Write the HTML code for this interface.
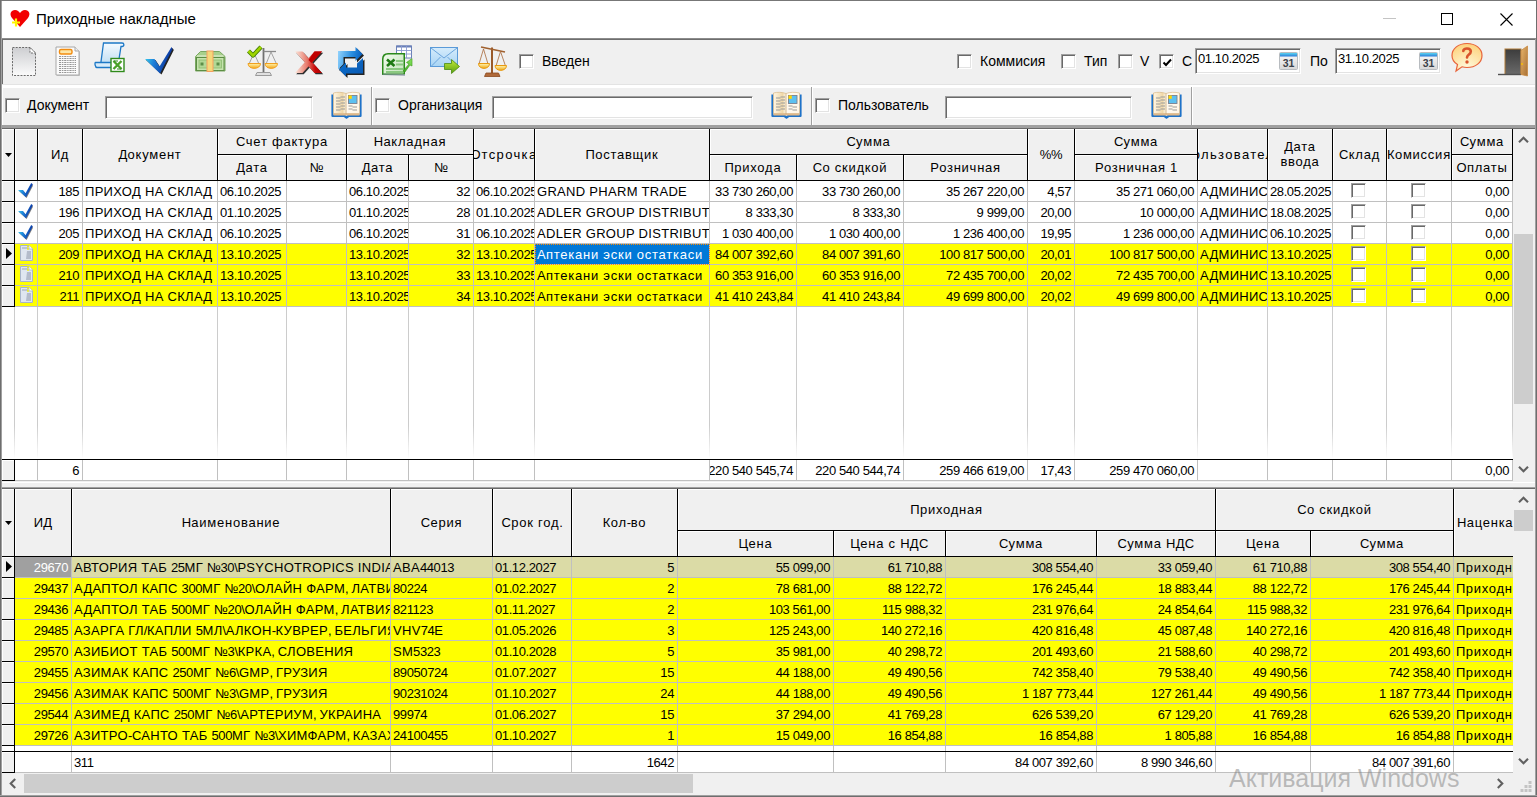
<!DOCTYPE html><html><head><meta charset="utf-8"><style>
*{margin:0;padding:0;box-sizing:border-box}
html,body{width:1537px;height:797px;overflow:hidden;background:#f0f0f0;font-family:"Liberation Sans",sans-serif;color:#000}
div{position:absolute}
svg{position:absolute;overflow:visible}
.d{letter-spacing:-0.4px}.u{letter-spacing:0.3px}.l{letter-spacing:0.75px}
.g{font-size:13px;line-height:20px;white-space:nowrap;overflow:hidden;display:flex;align-items:center}
.hc{background:#f0f0f0;border-right:1px solid #000;border-bottom:1px solid #000;box-shadow:inset 1px 1px 0 #fff;font-size:13px;line-height:14px;white-space:nowrap;overflow:hidden;display:flex;align-items:center;justify-content:center;text-align:center}
.c{border-right:1px solid #c0c0c0;border-bottom:1px solid #c0c0c0;font-size:13px;line-height:20px;white-space:nowrap;overflow:hidden;display:flex;align-items:center}
.c>span{position:relative;top:1px}
.r{justify-content:flex-end;padding-right:3px}
.lft{padding-left:2px}
.ind{background:#f0f0f0;border-right:1px solid #000;border-bottom:1px solid #000;box-shadow:inset 1px 1px 0 #fff}
.lbl{font-size:14px;line-height:16px;white-space:nowrap}
.cb{width:15px;height:15px;background:#fff;border-top:1px solid #a0a0a0;border-left:1px solid #a0a0a0;border-right:1px solid #fff;border-bottom:1px solid #fff;box-shadow:inset 1px 1px 0 #696969, inset -1px -1px 0 #e3e3e3}
.ed{background:#fff;border-top:1px solid #a0a0a0;border-left:1px solid #a0a0a0;border-right:1px solid #fff;border-bottom:1px solid #fff;box-shadow:inset 1px 1px 0 #696969, inset -1px -1px 0 #e3e3e3}
</style></head><body><div style="left:0px;top:0px;width:1537px;height:797px;background:#f0f0f0"></div>
<div style="left:0px;top:0px;width:1537px;height:1px;background:#777"></div>
<div style="left:1px;top:1px;width:1535px;height:37px;background:#fff"></div>
<div style="left:0px;top:0px;width:1px;height:797px;background:#6e6e6e"></div>
<div style="left:1536px;top:0px;width:1px;height:797px;background:#6e6e6e"></div>
<div style="left:1px;top:0px;width:1px;height:797px;background:#a0a0a0"></div>
<div style="left:1535px;top:38px;width:1px;height:759px;background:#a0a0a0"></div>
<div style="left:0px;top:796px;width:1537px;height:1px;background:#6e6e6e"></div>
<svg style="left:10px;top:10px" width="20" height="18" viewBox="0 0 20 18"><path d="M10 17 L2 8 C-1 4 1 0 5 0 C7.5 0 9 1.5 10 3 C11 1.5 12.5 0 15 0 C19 0 21 4 18 8 Z" fill="#f20000"/><path d="M2 12.5 H10 M6 8.5 V16.5" stroke="#ffff00" stroke-width="2.2" fill="none"/><path d="M2.8 12.5 H9.2 M6 9.3 V15.7" stroke="#ffee00" stroke-width="1" fill="none"/></svg>
<div style="left:36px;top:10px;font-size:15px;line-height:18px;white-space:nowrap;color:#000">Приходные накладные</div>
<div style="left:1383px;top:18px;width:13px;height:1px;background:#c4c4c4"></div>
<div style="left:1441px;top:13px;width:12px;height:12px;border:1px solid #000"></div>
<svg style="left:1500px;top:13px" width="13" height="13" viewBox="0 0 13 13"><path d="M0.5 0.5 L12.5 12.5 M12.5 0.5 L0.5 12.5" stroke="#000" stroke-width="1.1"/></svg>
<div style="left:2px;top:38px;width:1534px;height:1px;background:#8c8c8c"></div>
<div style="left:2px;top:39px;width:1534px;height:1px;background:#6e6e6e"></div>
<div style="left:2px;top:40px;width:1533px;height:44px;background:#f0f0f0"></div>
<div style="left:2px;top:40px;width:1px;height:44px;background:#6e6e6e"></div>
<div style="left:2px;top:84px;width:1534px;height:1px;background:#e3e3e3"></div>
<div style="left:2px;top:85px;width:1534px;height:2px;background:#fff"></div>
<svg style="left:11px;top:46px" width="26" height="31" viewBox="0 0 26 31"><defs><linearGradient id="gnd" x1="0" y1="0" x2="0" y2="1"><stop offset="0" stop-color="#cdced1"/><stop offset="1" stop-color="#fbfbfb"/></linearGradient></defs>
<path d="M1.5 1.5 H19 L24.5 7 V29.5 H1.5 Z" fill="url(#gnd)" stroke="#6a6a6a" stroke-width="1" stroke-dasharray="2 1.2"/>
<path d="M19 1.5 V7 H24.5 Z" fill="#fff" stroke="#6a6a6a" stroke-width="1" stroke-dasharray="2 1.2"/></svg>
<svg style="left:55px;top:46px" width="26" height="31" viewBox="0 0 26 31"><path d="M2 2 H21 L25 6 V30 H2 Z" fill="#c6c6c6"/>
<path d="M1 1 H20 L24 5 V29 H1 Z" fill="#fbfbfb" stroke="#a8a8a8"/>
<path d="M20 1 V5 H24" fill="#eee" stroke="#a8a8a8"/>
<rect x="4.5" y="3.5" width="12.5" height="4.5" rx="1.5" fill="#fde7a8" stroke="#f28c0f" stroke-width="1.4"/><path d="M4 10.5 H21" stroke="#8a8a8a" stroke-width="0.9" stroke-dasharray="2.2 0.8 1.4 0.8"/><path d="M4 12.5 H21" stroke="#8a8a8a" stroke-width="0.9" stroke-dasharray="2.2 0.8 1.4 0.8"/><path d="M4 14.5 H21" stroke="#8a8a8a" stroke-width="0.9" stroke-dasharray="2.2 0.8 1.4 0.8"/><path d="M4 16.5 H21" stroke="#8a8a8a" stroke-width="0.9" stroke-dasharray="2.2 0.8 1.4 0.8"/><path d="M4 18.5 H21" stroke="#8a8a8a" stroke-width="0.9" stroke-dasharray="2.2 0.8 1.4 0.8"/><path d="M4 20.5 H21" stroke="#8a8a8a" stroke-width="0.9" stroke-dasharray="2.2 0.8 1.4 0.8"/><path d="M4 22.5 H21" stroke="#8a8a8a" stroke-width="0.9" stroke-dasharray="2.2 0.8 1.4 0.8"/><path d="M4 24.5 H21" stroke="#8a8a8a" stroke-width="0.9" stroke-dasharray="2.2 0.8 1.4 0.8"/><path d="M4 26.5 H21" stroke="#8a8a8a" stroke-width="0.9" stroke-dasharray="2.2 0.8 1.4 0.8"/></svg>
<svg style="left:94px;top:42px" width="31" height="31" viewBox="0 0 31 31"><defs><linearGradient id="gsc" x1="0" y1="0" x2="0" y2="1"><stop offset="0" stop-color="#f4faff"/><stop offset="1" stop-color="#bcdcf2"/></linearGradient></defs>
<path d="M9.5 1 H28 C30.5 1 30.5 4.5 28 4.5 H27 L24 23.5 H6.5 Z" fill="url(#gsc)" stroke="#1d78c6" stroke-width="1.3"/>
<path d="M1.5 20.5 H22 L23 25.5 H3 C1 25.5 0.5 20.5 1.5 20.5 Z" fill="#d8ecfa" stroke="#1d78c6" stroke-width="1.3"/>
<rect x="17" y="16.5" width="13" height="13" fill="#fff" stroke="#2f8a1a" stroke-width="1.4"/>
<path d="M19.5 19 L27.5 27 M27.5 19 L19.5 27" stroke="#4aa028" stroke-width="2.4"/>
<path d="M19.5 19 H24 M23 27 H27.5" stroke="#2f8a1a" stroke-width="1.2"/></svg>
<svg style="left:145px;top:47px" width="30" height="29" viewBox="0 0 30 29"><defs><linearGradient id="gck" x1="0" y1="0" x2="1" y2="0.3"><stop offset="0" stop-color="#3ee6f6"/><stop offset="0.45" stop-color="#1e7fd8"/><stop offset="1" stop-color="#0a2f9a"/></linearGradient></defs>
<path d="M1 13 H10.5 L15.5 20.5 L27.5 1 L28.8 3 L16.5 27.5 Z" fill="#000" opacity="0.85"/>
<path d="M0 12 H9.5 L14.5 19.5 L26.5 0 L27.5 2 L15 26.5 Z" fill="url(#gck)"/></svg>
<svg style="left:195px;top:51px" width="31" height="21" viewBox="0 0 31 21"><path d="M5.5 0.5 H24.5 L30 5.5 V20 H0.5 V5.5 Z" fill="#a8d08c" stroke="#7aa862" stroke-width="1"/>
<path d="M2 5 H28.5" stroke="#e8f4dc" stroke-width="1"/>
<rect x="1.5" y="6.5" width="27.5" height="13" fill="#c6e4ae" stroke="#5c8e44" stroke-width="1"/>
<rect x="4" y="9" width="22.5" height="8" fill="#b2d896" stroke="#8cbc70" stroke-width="0.8"/>
<rect x="5.5" y="11.5" width="3" height="3" fill="#5e8e48"/><rect x="21.5" y="11.5" width="3" height="3" fill="#5e8e48"/>
<rect x="12" y="0" width="6" height="20.5" fill="#f6d87a" stroke="#f4a060" stroke-width="1"/></svg>
<svg style="left:247px;top:45px" width="33" height="33" viewBox="0 0 33 33"><defs><linearGradient id="gpan" x1="0" y1="0" x2="0" y2="1"><stop offset="0" stop-color="#fff2a8"/><stop offset="1" stop-color="#f4a81c"/></linearGradient></defs>
<path d="M16.5 3 V27" stroke="#707070" stroke-width="1.8"/>
<path d="M16.5 6.5 H29" stroke="#8a8a8a" stroke-width="1.3"/>
<path d="M2 19 L7 8 L12 19 M19 19 L24 7 L29.5 19" stroke="#9a9a9a" stroke-width="0.9" fill="none"/>
<path d="M1 18.5 H13.5 C13.5 25 1 25 1 18.5 Z" fill="url(#gpan)" stroke="#f0a020" stroke-width="1"/>
<path d="M18 18.5 H30.5 C30.5 25 18 25 18 18.5 Z" fill="url(#gpan)" stroke="#f0a020" stroke-width="1"/>
<path d="M8.5 30.5 H24.5 L23 27.5 H10 Z" fill="#e0e0e0" stroke="#9a9a9a" stroke-width="1"/>
<path d="M1.5 6 L6 10.5 L14 2" stroke="#3f7a00" stroke-width="4.2" fill="none" stroke-linejoin="round"/>
<path d="M1.5 6 L6 10.5 L14 2" stroke="#9ed400" stroke-width="2.6" fill="none" stroke-linejoin="round"/></svg>
<svg style="left:294px;top:50px" width="30" height="26" viewBox="0 0 30 26"><defs><linearGradient id="gx1" x1="0" y1="0" x2="1" y2="0"><stop offset="0" stop-color="#fde8dc"/><stop offset="0.45" stop-color="#e6786a"/><stop offset="0.75" stop-color="#c80808"/><stop offset="1" stop-color="#b00000"/></linearGradient></defs>
<g transform="translate(1.2,1.2)" fill="#000" opacity="0.8"><path d="M1 1.5 H8.5 L28 23 H20.5 Z"/><path d="M28 1.5 H20.5 L1 23 H8.5 Z"/></g>
<path d="M1 1.5 H8.5 L28 23 H20.5 Z" fill="url(#gx1)"/>
<path d="M28 1.5 H20.5 L1 23 H8.5 Z" fill="url(#gx1)"/>
<path d="M20.5 1.5 H28 L17.5 13 L14.5 10 Z" fill="#c00000"/></svg>
<svg style="left:337px;top:46px" width="29" height="32" viewBox="0 0 29 32"><defs><linearGradient id="grf" x1="0" y1="0" x2="1" y2="0.2"><stop offset="0" stop-color="#9ad8ff"/><stop offset="0.6" stop-color="#2a8ee0"/><stop offset="1" stop-color="#0a62c0"/></linearGradient><linearGradient id="grf2" x1="0" y1="0" x2="1" y2="1"><stop offset="0" stop-color="#0a70d0"/><stop offset="1" stop-color="#0a58b0"/></linearGradient></defs>
<g transform="translate(1.5,1.5)" fill="#000" opacity="0.85"><path d="M1 5 H18.5 V1 L25.5 8 L18.5 15 V11 H6.5 V18 L1 23.5 Z"/><path d="M26 12 V27.5 H9 V30.5 L2 23.5 L9 16.5 V21.5 H20 V17.5 Z"/></g>
<path d="M1 5 H18.5 V1 L25.5 8 L18.5 15 V11 H6.5 V18 L1 23.5 Z" fill="url(#grf)"/>
<path d="M26 12 V27.5 H9 V30.5 L2 23.5 L9 16.5 V21.5 H20 V17.5 Z" fill="url(#grf2)"/></svg>
<svg style="left:381px;top:45px" width="32" height="32" viewBox="0 0 32 32"><defs><linearGradient id="gex" x1="0" y1="0" x2="1" y2="1"><stop offset="0" stop-color="#f0faec"/><stop offset="1" stop-color="#c4e4bc"/></linearGradient><linearGradient id="gea" x1="0" y1="1" x2="1" y2="0"><stop offset="0" stop-color="#3aa020"/><stop offset="1" stop-color="#8ae860"/></linearGradient></defs>
<rect x="15.5" y="1" width="15" height="12" fill="#fff" stroke="#6a80b8" stroke-width="1"/>
<path d="M15.5 1.5 H30.5" stroke="#6a80b8" stroke-width="2"/>
<path d="M15.5 5.5 H30.5 M15.5 9 H30.5 M20.5 1 V13 M25.5 1 V13" stroke="#8a9ad0" stroke-width="0.9"/>
<path d="M1 30 V14 Q1 8 7 8 H24 V29.5 Z" fill="#2a8a1a"/>
<path d="M2.5 28.5 V14.5 Q2.5 9.5 7.5 9.5 H22.5 V28.5 Z" fill="url(#gex)"/>
<path d="M1 30 L24 31 V29 L2.5 28.5 Z" fill="#7a8a9a" opacity="0.6"/>
<path d="M6 14.5 L13.5 21 M13.5 14.5 L6 21" stroke="#1e7a14" stroke-width="2.6"/>
<path d="M15 16 H22 M15 19.5 H22 M5 24 H22 M5 27 H22" stroke="#8ac880" stroke-width="2"/>
<path d="M22 26 L28 19 L25.5 17.5 L31 13.5 L31 21 L29 20 L24 27 Z" fill="url(#gea)" stroke="#3a9a18" stroke-width="0.6"/></svg>
<svg style="left:430px;top:47px" width="31" height="29" viewBox="0 0 31 29"><defs><linearGradient id="gml" x1="0" y1="0" x2="0" y2="1"><stop offset="0" stop-color="#d6ecfc"/><stop offset="1" stop-color="#a8d4f4"/></linearGradient><linearGradient id="gar" x1="0" y1="0" x2="0" y2="1"><stop offset="0" stop-color="#c4ec3a"/><stop offset="1" stop-color="#5aa010"/></linearGradient></defs>
<rect x="0.5" y="0.5" width="27" height="19" fill="url(#gml)" stroke="#5a9ad8" stroke-width="1"/>
<path d="M1 1 L14 11 L27 1 M1 19.5 L10.5 10 M27 19.5 L17.5 10" stroke="#6aa4dc" stroke-width="1" fill="none"/>
<path d="M14.5 16.5 H21.5 V12.5 L29.5 19.5 L21.5 26.5 V22.5 H14.5 Z" fill="url(#gar)" stroke="#4a8a10" stroke-width="0.8"/></svg>
<svg style="left:478px;top:45px" width="33" height="33" viewBox="0 0 33 33"><defs><linearGradient id="gpb" x1="0" y1="0" x2="0" y2="1"><stop offset="0" stop-color="#fff4b0"/><stop offset="1" stop-color="#f0a818"/></linearGradient></defs>
<path d="M14 2.5 V28" stroke="#9a5a2a" stroke-width="2"/>
<path d="M3 2 L27 7" stroke="#a0602e" stroke-width="1.6"/>
<path d="M1 19 L5.5 4 L10 19 M18 21 L22.5 6.5 L27.5 21" stroke="#a8683a" stroke-width="0.8" fill="none"/>
<path d="M0.5 18.5 H11.5 C11.5 25 0.5 25 0.5 18.5 Z" fill="url(#gpb)" stroke="#e89a10" stroke-width="1"/>
<path d="M17 20.5 H28.5 C28.5 27 17 27 17 20.5 Z" fill="url(#gpb)" stroke="#e89a10" stroke-width="1"/>
<path d="M6.5 31.5 H22 L20.5 28 H8 Z" fill="#b06a3a" stroke="#8a4a20" stroke-width="0.8"/></svg>
<div class="cb" style="left:519px;top:54px"></div>
<div class="lbl" style="left:542px;top:53px;font-size:14px">Введен</div>
<div class="cb" style="left:957px;top:54px"></div>
<div class="lbl" style="left:980px;top:53px;font-size:14px">Коммисия</div>
<div class="cb" style="left:1061px;top:54px"></div>
<div class="lbl" style="left:1084px;top:53px;font-size:14px">Тип</div>
<div class="cb" style="left:1118px;top:54px"></div>
<div class="lbl" style="left:1140px;top:53px;font-size:14px">V</div>
<div class="cb" style="left:1159px;top:54px"><svg style="left:2px;top:2px" width="11" height="11" viewBox="0 0 11 11"><path d="M1.5 5.5 L4 8 L9 2.5" stroke="#000" stroke-width="2" fill="none"/></svg></div>
<div class="lbl" style="left:1182px;top:53px;font-size:14px">С</div>
<div class="lbl" style="left:1310px;top:53px;font-size:14px">По</div>
<div class="ed" style="left:1195px;top:48px;width:106px;height:26px"></div>
<div style="left:1198px;top:51px;font-size:13px;line-height:15px;white-space:nowrap"><span><span class="d">01.10.2025</span></span></div>
<svg style="left:1279px;top:52px" width="19" height="18" viewBox="0 0 19 18"><defs><linearGradient id="gcal" x1="0" y1="0" x2="0" y2="1"><stop offset="0" stop-color="#fafafa"/><stop offset="1" stop-color="#d8d8d8"/></linearGradient></defs>
<defs><linearGradient id="gct" x1="0" y1="0" x2="0" y2="1"><stop offset="0" stop-color="#5ad4f0"/><stop offset="1" stop-color="#2a7ad8"/></linearGradient></defs>
<rect x="0.5" y="0.5" width="18" height="17" rx="1" fill="url(#gcal)" stroke="#b8bcc0"/>
<rect x="1" y="1" width="17" height="3.5" fill="url(#gct)"/>
<text x="9.5" y="15" font-family="Liberation Sans" font-weight="bold" font-size="10.5" text-anchor="middle" fill="#3a4048">31</text></svg>
<div class="ed" style="left:1335px;top:48px;width:106px;height:26px"></div>
<div style="left:1338px;top:51px;font-size:13px;line-height:15px;white-space:nowrap"><span><span class="d">31.10.2025</span></span></div>
<svg style="left:1419px;top:52px" width="19" height="18" viewBox="0 0 19 18"><defs><linearGradient id="gcal" x1="0" y1="0" x2="0" y2="1"><stop offset="0" stop-color="#fafafa"/><stop offset="1" stop-color="#d8d8d8"/></linearGradient></defs>
<defs><linearGradient id="gct" x1="0" y1="0" x2="0" y2="1"><stop offset="0" stop-color="#5ad4f0"/><stop offset="1" stop-color="#2a7ad8"/></linearGradient></defs>
<rect x="0.5" y="0.5" width="18" height="17" rx="1" fill="url(#gcal)" stroke="#b8bcc0"/>
<rect x="1" y="1" width="17" height="3.5" fill="url(#gct)"/>
<text x="9.5" y="15" font-family="Liberation Sans" font-weight="bold" font-size="10.5" text-anchor="middle" fill="#3a4048">31</text></svg>
<svg style="left:1451px;top:42px" width="33" height="31" viewBox="0 0 33 31"><defs><radialGradient id="ghb" cx="0.5" cy="0.9" r="0.9"><stop offset="0" stop-color="#fffbe0"/><stop offset="1" stop-color="#fdd27c"/></radialGradient></defs>
<path d="M16 1.5 C24.5 1.5 31 6.5 31 13.5 C31 20.5 24.5 25.5 16 25.5 C14 25.5 12.5 25.3 11 24.8 L5 29 L6.5 22.5 C3 20.5 1 17.5 1 13.5 C1 6.5 7.5 1.5 16 1.5 Z" fill="url(#ghb)" stroke="#e8643a" stroke-width="1.2"/>
<path d="M12.3 9 C12.3 5.5 19.8 5.5 19.8 9.5 C19.8 12.5 16 12.5 16 15.5" stroke="#d9542b" stroke-width="2.6" fill="none" stroke-linecap="round"/>
<circle cx="16" cy="20" r="1.7" fill="#d9542b"/></svg>
<svg style="left:1497px;top:45px" width="33" height="33" viewBox="0 0 33 33"><defs><linearGradient id="gdr" x1="0" y1="0" x2="0" y2="1"><stop offset="0" stop-color="#3c3c3c"/><stop offset="1" stop-color="#6a6a6a"/></linearGradient><linearGradient id="gwd" x1="0" y1="0" x2="1" y2="1"><stop offset="0" stop-color="#e8b46a"/><stop offset="1" stop-color="#a87034"/></linearGradient></defs>
<rect x="8" y="4" width="16" height="25.5" fill="url(#gdr)" stroke="#b07a36" stroke-width="1"/>
<path d="M1 29.5 H24" stroke="#505050" stroke-width="1.4"/>
<path d="M24 5.5 L30.5 1 V31 L24 29.5 Z" fill="url(#gwd)" stroke="#c88a44" stroke-width="0.8"/>
<path d="M25 18 V20" stroke="#f8c000" stroke-width="1.4"/></svg>
<div style="left:2px;top:87px;width:1533px;height:38px;background:#f0f0f0"></div>
<div style="left:2px;top:87px;width:1189px;height:1px;background:#fff"></div>
<div style="left:2px;top:85px;width:1px;height:40px;background:#fff"></div>
<div style="left:371px;top:87px;width:1px;height:38px;background:#a0a0a0"></div>
<div style="left:372px;top:87px;width:1px;height:38px;background:#fff"></div>
<div style="left:811px;top:87px;width:1px;height:38px;background:#a0a0a0"></div>
<div style="left:812px;top:87px;width:1px;height:38px;background:#fff"></div>
<div style="left:1191px;top:87px;width:1px;height:38px;background:#a0a0a0"></div>
<div style="left:1192px;top:87px;width:1px;height:38px;background:#fff"></div>
<div class="cb" style="left:5px;top:98px"></div>
<div class="lbl" style="left:27px;top:97px;font-size:14px">Документ</div>
<div class="ed" style="left:105px;top:96px;width:208px;height:23px"></div>
<svg style="left:331px;top:92px" width="31" height="26" viewBox="0 0 31 26"><defs><linearGradient id="gbk" x1="0" y1="0" x2="1" y2="0"><stop offset="0" stop-color="#fff6e4"/><stop offset="0.35" stop-color="#f0d8a8"/><stop offset="0.5" stop-color="#fffaf0"/><stop offset="1" stop-color="#fff6e6"/></linearGradient></defs>
<path d="M1.5 2.5 V24 H13.5 L15.5 25.5 L17.5 24 H29.5 V2.5" fill="none" stroke="#1e72c8" stroke-width="2.2" stroke-linejoin="round"/>
<path d="M2.5 1 C6 0 11 0 15 1.5 C19 0 24 0 28.5 1 V21.5 H2.5 Z" fill="url(#gbk)" stroke="#d8b888" stroke-width="0.7"/>
<path d="M2.5 21.5 H28.5 V23.5 H2.5 Z" fill="#e0b888"/>
<path d="M15 1.5 V22" stroke="#c8a878" stroke-width="0.8"/>
<g stroke="#9a9a9a" stroke-width="1.1"><path d="M5 6 H9.5 M9.5 5 H14 M5 9 H9.5 M9.5 8 H14 M5 12 H9.5 M9.5 11 H14 M5 15 H9.5 M9.5 14 H14 M5 18 H9.5 M9.5 17 H14"/><path d="M17.5 14 H21.5 M21.5 15 H26 M17.5 17 H21.5 M21.5 18 H26"/></g>
<rect x="17.5" y="3.5" width="8.5" height="8" fill="#5cc0f0" stroke="#7a8090" stroke-width="0.9"/>
<rect x="17.5" y="3.5" width="3.3" height="3.3" fill="#ffd400"/></svg>
<div class="cb" style="left:375px;top:98px"></div>
<div class="lbl" style="left:398px;top:97px;font-size:14px">Организация</div>
<div class="ed" style="left:492px;top:96px;width:261px;height:23px"></div>
<svg style="left:771px;top:92px" width="31" height="26" viewBox="0 0 31 26"><defs><linearGradient id="gbk" x1="0" y1="0" x2="1" y2="0"><stop offset="0" stop-color="#fff6e4"/><stop offset="0.35" stop-color="#f0d8a8"/><stop offset="0.5" stop-color="#fffaf0"/><stop offset="1" stop-color="#fff6e6"/></linearGradient></defs>
<path d="M1.5 2.5 V24 H13.5 L15.5 25.5 L17.5 24 H29.5 V2.5" fill="none" stroke="#1e72c8" stroke-width="2.2" stroke-linejoin="round"/>
<path d="M2.5 1 C6 0 11 0 15 1.5 C19 0 24 0 28.5 1 V21.5 H2.5 Z" fill="url(#gbk)" stroke="#d8b888" stroke-width="0.7"/>
<path d="M2.5 21.5 H28.5 V23.5 H2.5 Z" fill="#e0b888"/>
<path d="M15 1.5 V22" stroke="#c8a878" stroke-width="0.8"/>
<g stroke="#9a9a9a" stroke-width="1.1"><path d="M5 6 H9.5 M9.5 5 H14 M5 9 H9.5 M9.5 8 H14 M5 12 H9.5 M9.5 11 H14 M5 15 H9.5 M9.5 14 H14 M5 18 H9.5 M9.5 17 H14"/><path d="M17.5 14 H21.5 M21.5 15 H26 M17.5 17 H21.5 M21.5 18 H26"/></g>
<rect x="17.5" y="3.5" width="8.5" height="8" fill="#5cc0f0" stroke="#7a8090" stroke-width="0.9"/>
<rect x="17.5" y="3.5" width="3.3" height="3.3" fill="#ffd400"/></svg>
<div class="cb" style="left:815px;top:98px"></div>
<div class="lbl" style="left:838px;top:97px;font-size:14px">Пользователь</div>
<div class="ed" style="left:945px;top:96px;width:187px;height:23px"></div>
<svg style="left:1151px;top:92px" width="31" height="26" viewBox="0 0 31 26"><defs><linearGradient id="gbk" x1="0" y1="0" x2="1" y2="0"><stop offset="0" stop-color="#fff6e4"/><stop offset="0.35" stop-color="#f0d8a8"/><stop offset="0.5" stop-color="#fffaf0"/><stop offset="1" stop-color="#fff6e6"/></linearGradient></defs>
<path d="M1.5 2.5 V24 H13.5 L15.5 25.5 L17.5 24 H29.5 V2.5" fill="none" stroke="#1e72c8" stroke-width="2.2" stroke-linejoin="round"/>
<path d="M2.5 1 C6 0 11 0 15 1.5 C19 0 24 0 28.5 1 V21.5 H2.5 Z" fill="url(#gbk)" stroke="#d8b888" stroke-width="0.7"/>
<path d="M2.5 21.5 H28.5 V23.5 H2.5 Z" fill="#e0b888"/>
<path d="M15 1.5 V22" stroke="#c8a878" stroke-width="0.8"/>
<g stroke="#9a9a9a" stroke-width="1.1"><path d="M5 6 H9.5 M9.5 5 H14 M5 9 H9.5 M9.5 8 H14 M5 12 H9.5 M9.5 11 H14 M5 15 H9.5 M9.5 14 H14 M5 18 H9.5 M9.5 17 H14"/><path d="M17.5 14 H21.5 M21.5 15 H26 M17.5 17 H21.5 M21.5 18 H26"/></g>
<rect x="17.5" y="3.5" width="8.5" height="8" fill="#5cc0f0" stroke="#7a8090" stroke-width="0.9"/>
<rect x="17.5" y="3.5" width="3.3" height="3.3" fill="#ffd400"/></svg>
<div style="left:2px;top:125px;width:1533px;height:3px;background:#a0a0a0"></div>
<div style="left:2px;top:128px;width:1533px;height:1px;background:#696969"></div>
<div style="left:2px;top:129px;width:1511px;height:330px;background:#fff"></div>
<div class="hc" style="left:2px;top:129px;width:13px;height:52px;"></div>
<svg style="left:5px;top:153px" width="8" height="5" viewBox="0 0 8 5"><path d="M0 0 H7 L3.5 4 Z" fill="#000"/></svg>
<div class="hc" style="left:15px;top:129px;width:23px;height:52px;"></div>
<div class="hc" style="left:38px;top:129px;width:45px;height:52px;"><span><span class="u">И</span><span class="l">д</span></span></div>
<div class="hc" style="left:83px;top:129px;width:135px;height:52px;"><span><span class="u">Д</span><span class="l">окумент</span></span></div>
<div class="hc" style="left:218px;top:129px;width:129px;height:26px;"><span><span class="u">С</span><span class="l">чет фактура</span></span></div>
<div class="hc" style="left:218px;top:155px;width:69px;height:26px;"><span><span class="u">Д</span><span class="l">ата</span></span></div>
<div class="hc" style="left:287px;top:155px;width:60px;height:26px;"><span><span class="d">№</span></span></div>
<div class="hc" style="left:347px;top:129px;width:127px;height:26px;"><span><span class="u">Н</span><span class="l">акладная</span></span></div>
<div class="hc" style="left:347px;top:155px;width:62px;height:26px;"><span><span class="u">Д</span><span class="l">ата</span></span></div>
<div class="hc" style="left:409px;top:155px;width:65px;height:26px;"><span><span class="d">№</span></span></div>
<div class="hc" style="left:474px;top:129px;width:61px;height:52px;"><span><span style="letter-spacing:0.90px">О</span><span style="letter-spacing:1.35px">тсрочка</span></span></div>
<div class="hc" style="left:535px;top:129px;width:175px;height:52px;"><span><span class="u">П</span><span class="l">оставщик</span></span></div>
<div class="hc" style="left:710px;top:129px;width:318px;height:26px;"><span><span class="u">С</span><span class="l">умма</span></span></div>
<div class="hc" style="left:710px;top:155px;width:87px;height:26px;"><span><span class="u">П</span><span class="l">рихода</span></span></div>
<div class="hc" style="left:797px;top:155px;width:107px;height:26px;"><span><span class="u">С</span><span class="l">о скидкой</span></span></div>
<div class="hc" style="left:904px;top:155px;width:124px;height:26px;"><span><span class="u">Р</span><span class="l">озничная</span></span></div>
<div class="hc" style="left:1028px;top:129px;width:47px;height:52px;"><span><span class="d">%%</span></span></div>
<div class="hc" style="left:1075px;top:129px;width:123px;height:26px;"><span><span class="u">С</span><span class="l">умма</span></span></div>
<div class="hc" style="left:1075px;top:155px;width:123px;height:26px;"><span><span class="u">Р</span><span class="l">озничная </span><span class="d">1</span></span></div>
<div class="hc" style="left:1198px;top:129px;width:70px;height:52px;"><span><span style="letter-spacing:0.90px">П</span><span style="letter-spacing:1.35px">ользователь</span></span></div>
<div class="hc" style="left:1268px;top:129px;width:65px;height:52px;line-height:15px;padding-bottom:1px"><span><span><span class="u">Д</span><span class="l">ата</span></span><br><span><span class="l">ввода</span></span></span></div>
<div class="hc" style="left:1333px;top:129px;width:54px;height:52px;"><span><span class="u">С</span><span class="l">клад</span></span></div>
<div class="hc" style="left:1387px;top:129px;width:65px;height:52px;"><span><span class="u">К</span><span class="l">омиссия</span></span></div>
<div class="hc" style="left:1452px;top:129px;width:61px;height:26px;"><span><span class="u">С</span><span class="l">умма</span></span></div>
<div class="hc" style="left:1452px;top:155px;width:61px;height:26px;"><span><span class="u">О</span><span class="l">платы</span></span></div>
<div class="ind" style="left:2px;top:181px;width:13px;height:21px"></div>
<div class="c lft" style="left:15px;top:181px;width:23px;height:21px;border-color:#c0c0c0;background:#ffffff;"></div>
<svg style="left:18px;top:183px" width="15" height="15" viewBox="0 0 15 15"><defs><linearGradient id="gck2" x1="0" y1="0" x2="1" y2="0.3"><stop offset="0" stop-color="#40e0f8"/><stop offset="0.5" stop-color="#1e80d8"/><stop offset="1" stop-color="#0a30a0"/></linearGradient></defs>
<path d="M1 8 H5.5 L8 11 L14 1.2 L15 2.8 L8.6 15 Z" fill="#000" opacity="0.5"/><path d="M0 7 H5 L7.5 10.2 L13.2 0 L14.8 1.2 L8 14.2 Z" fill="url(#gck2)"/></svg>
<div class="c r" style="left:38px;top:181px;width:45px;height:21px;border-color:#c0c0c0;background:#ffffff;"><span><span class="d">185</span></span></div>
<div class="c lft" style="left:83px;top:181px;width:135px;height:21px;border-color:#c0c0c0;background:#ffffff;"><span><span class="u">ПРИХОД НА СКЛАД</span></span></div>
<div class="c lft" style="left:218px;top:181px;width:69px;height:21px;border-color:#c0c0c0;background:#ffffff;"><span><span class="d">06.10.2025</span></span></div>
<div class="c r" style="left:287px;top:181px;width:60px;height:21px;border-color:#c0c0c0;background:#ffffff;"></div>
<div class="c lft" style="left:347px;top:181px;width:62px;height:21px;border-color:#c0c0c0;background:#ffffff;"><span><span class="d">06.10.2025</span></span></div>
<div class="c r" style="left:409px;top:181px;width:65px;height:21px;border-color:#c0c0c0;background:#ffffff;"><span><span class="d">32</span></span></div>
<div class="c lft" style="left:474px;top:181px;width:61px;height:21px;border-color:#c0c0c0;background:#ffffff;"><span><span class="d">06.10.2025</span></span></div>
<div class="c lft" style="left:535px;top:181px;width:175px;height:21px;border-color:#c0c0c0;background:#ffffff;"><span><span class="u">GRAND PHARM TRADE</span></span></div>
<div class="c r" style="left:710px;top:181px;width:87px;height:21px;border-color:#c0c0c0;background:#ffffff;"><span><span class="d">33 730 260,00</span></span></div>
<div class="c r" style="left:797px;top:181px;width:107px;height:21px;border-color:#c0c0c0;background:#ffffff;"><span><span class="d">33 730 260,00</span></span></div>
<div class="c r" style="left:904px;top:181px;width:124px;height:21px;border-color:#c0c0c0;background:#ffffff;"><span><span class="d">35 267 220,00</span></span></div>
<div class="c r" style="left:1028px;top:181px;width:47px;height:21px;border-color:#c0c0c0;background:#ffffff;"><span><span class="d">4,57</span></span></div>
<div class="c r" style="left:1075px;top:181px;width:123px;height:21px;border-color:#c0c0c0;background:#ffffff;"><span><span class="d">35 271 060,00</span></span></div>
<div class="c lft" style="left:1198px;top:181px;width:70px;height:21px;border-color:#c0c0c0;background:#ffffff;"><span><span class="u">АДМИНИСТРАТОР</span></span></div>
<div class="c lft" style="left:1268px;top:181px;width:65px;height:21px;border-color:#c0c0c0;background:#ffffff;"><span><span class="d">28.05.2025</span></span></div>
<div class="c lft" style="left:1333px;top:181px;width:54px;height:21px;border-color:#c0c0c0;background:#ffffff;"></div>
<div class="cb" style="left:1351px;top:183px"></div>
<div class="c lft" style="left:1387px;top:181px;width:65px;height:21px;border-color:#c0c0c0;background:#ffffff;"></div>
<div class="cb" style="left:1411px;top:183px"></div>
<div class="c r" style="left:1452px;top:181px;width:61px;height:21px;border-color:#c0c0c0;background:#ffffff;"><span><span class="d">0,00</span></span></div>
<div class="ind" style="left:2px;top:202px;width:13px;height:21px"></div>
<div class="c lft" style="left:15px;top:202px;width:23px;height:21px;border-color:#c0c0c0;background:#ffffff;"></div>
<svg style="left:18px;top:204px" width="15" height="15" viewBox="0 0 15 15"><defs><linearGradient id="gck2" x1="0" y1="0" x2="1" y2="0.3"><stop offset="0" stop-color="#40e0f8"/><stop offset="0.5" stop-color="#1e80d8"/><stop offset="1" stop-color="#0a30a0"/></linearGradient></defs>
<path d="M1 8 H5.5 L8 11 L14 1.2 L15 2.8 L8.6 15 Z" fill="#000" opacity="0.5"/><path d="M0 7 H5 L7.5 10.2 L13.2 0 L14.8 1.2 L8 14.2 Z" fill="url(#gck2)"/></svg>
<div class="c r" style="left:38px;top:202px;width:45px;height:21px;border-color:#c0c0c0;background:#ffffff;"><span><span class="d">196</span></span></div>
<div class="c lft" style="left:83px;top:202px;width:135px;height:21px;border-color:#c0c0c0;background:#ffffff;"><span><span class="u">ПРИХОД НА СКЛАД</span></span></div>
<div class="c lft" style="left:218px;top:202px;width:69px;height:21px;border-color:#c0c0c0;background:#ffffff;"><span><span class="d">01.10.2025</span></span></div>
<div class="c r" style="left:287px;top:202px;width:60px;height:21px;border-color:#c0c0c0;background:#ffffff;"></div>
<div class="c lft" style="left:347px;top:202px;width:62px;height:21px;border-color:#c0c0c0;background:#ffffff;"><span><span class="d">01.10.2025</span></span></div>
<div class="c r" style="left:409px;top:202px;width:65px;height:21px;border-color:#c0c0c0;background:#ffffff;"><span><span class="d">28</span></span></div>
<div class="c lft" style="left:474px;top:202px;width:61px;height:21px;border-color:#c0c0c0;background:#ffffff;"><span><span class="d">01.10.2025</span></span></div>
<div class="c lft" style="left:535px;top:202px;width:175px;height:21px;border-color:#c0c0c0;background:#ffffff;"><span><span class="u">ADLER GROUP DISTRIBUTION</span></span></div>
<div class="c r" style="left:710px;top:202px;width:87px;height:21px;border-color:#c0c0c0;background:#ffffff;"><span><span class="d">8 333,30</span></span></div>
<div class="c r" style="left:797px;top:202px;width:107px;height:21px;border-color:#c0c0c0;background:#ffffff;"><span><span class="d">8 333,30</span></span></div>
<div class="c r" style="left:904px;top:202px;width:124px;height:21px;border-color:#c0c0c0;background:#ffffff;"><span><span class="d">9 999,00</span></span></div>
<div class="c r" style="left:1028px;top:202px;width:47px;height:21px;border-color:#c0c0c0;background:#ffffff;"><span><span class="d">20,00</span></span></div>
<div class="c r" style="left:1075px;top:202px;width:123px;height:21px;border-color:#c0c0c0;background:#ffffff;"><span><span class="d">10 000,00</span></span></div>
<div class="c lft" style="left:1198px;top:202px;width:70px;height:21px;border-color:#c0c0c0;background:#ffffff;"><span><span class="u">АДМИНИСТРАТОР</span></span></div>
<div class="c lft" style="left:1268px;top:202px;width:65px;height:21px;border-color:#c0c0c0;background:#ffffff;"><span><span class="d">18.08.2025</span></span></div>
<div class="c lft" style="left:1333px;top:202px;width:54px;height:21px;border-color:#c0c0c0;background:#ffffff;"></div>
<div class="cb" style="left:1351px;top:204px"></div>
<div class="c lft" style="left:1387px;top:202px;width:65px;height:21px;border-color:#c0c0c0;background:#ffffff;"></div>
<div class="cb" style="left:1411px;top:204px"></div>
<div class="c r" style="left:1452px;top:202px;width:61px;height:21px;border-color:#c0c0c0;background:#ffffff;"><span><span class="d">0,00</span></span></div>
<div class="ind" style="left:2px;top:223px;width:13px;height:21px"></div>
<div class="c lft" style="left:15px;top:223px;width:23px;height:21px;border-color:#c0c0c0;background:#ffffff;"></div>
<svg style="left:18px;top:225px" width="15" height="15" viewBox="0 0 15 15"><defs><linearGradient id="gck2" x1="0" y1="0" x2="1" y2="0.3"><stop offset="0" stop-color="#40e0f8"/><stop offset="0.5" stop-color="#1e80d8"/><stop offset="1" stop-color="#0a30a0"/></linearGradient></defs>
<path d="M1 8 H5.5 L8 11 L14 1.2 L15 2.8 L8.6 15 Z" fill="#000" opacity="0.5"/><path d="M0 7 H5 L7.5 10.2 L13.2 0 L14.8 1.2 L8 14.2 Z" fill="url(#gck2)"/></svg>
<div class="c r" style="left:38px;top:223px;width:45px;height:21px;border-color:#c0c0c0;background:#ffffff;"><span><span class="d">205</span></span></div>
<div class="c lft" style="left:83px;top:223px;width:135px;height:21px;border-color:#c0c0c0;background:#ffffff;"><span><span class="u">ПРИХОД НА СКЛАД</span></span></div>
<div class="c lft" style="left:218px;top:223px;width:69px;height:21px;border-color:#c0c0c0;background:#ffffff;"><span><span class="d">06.10.2025</span></span></div>
<div class="c r" style="left:287px;top:223px;width:60px;height:21px;border-color:#c0c0c0;background:#ffffff;"></div>
<div class="c lft" style="left:347px;top:223px;width:62px;height:21px;border-color:#c0c0c0;background:#ffffff;"><span><span class="d">06.10.2025</span></span></div>
<div class="c r" style="left:409px;top:223px;width:65px;height:21px;border-color:#c0c0c0;background:#ffffff;"><span><span class="d">31</span></span></div>
<div class="c lft" style="left:474px;top:223px;width:61px;height:21px;border-color:#c0c0c0;background:#ffffff;"><span><span class="d">06.10.2025</span></span></div>
<div class="c lft" style="left:535px;top:223px;width:175px;height:21px;border-color:#c0c0c0;background:#ffffff;"><span><span class="u">ADLER GROUP DISTRIBUTION</span></span></div>
<div class="c r" style="left:710px;top:223px;width:87px;height:21px;border-color:#c0c0c0;background:#ffffff;"><span><span class="d">1 030 400,00</span></span></div>
<div class="c r" style="left:797px;top:223px;width:107px;height:21px;border-color:#c0c0c0;background:#ffffff;"><span><span class="d">1 030 400,00</span></span></div>
<div class="c r" style="left:904px;top:223px;width:124px;height:21px;border-color:#c0c0c0;background:#ffffff;"><span><span class="d">1 236 400,00</span></span></div>
<div class="c r" style="left:1028px;top:223px;width:47px;height:21px;border-color:#c0c0c0;background:#ffffff;"><span><span class="d">19,95</span></span></div>
<div class="c r" style="left:1075px;top:223px;width:123px;height:21px;border-color:#c0c0c0;background:#ffffff;"><span><span class="d">1 236 000,00</span></span></div>
<div class="c lft" style="left:1198px;top:223px;width:70px;height:21px;border-color:#c0c0c0;background:#ffffff;"><span><span class="u">АДМИНИСТРАТОР</span></span></div>
<div class="c lft" style="left:1268px;top:223px;width:65px;height:21px;border-color:#c0c0c0;background:#ffffff;"><span><span class="d">06.10.2025</span></span></div>
<div class="c lft" style="left:1333px;top:223px;width:54px;height:21px;border-color:#c0c0c0;background:#ffffff;"></div>
<div class="cb" style="left:1351px;top:225px"></div>
<div class="c lft" style="left:1387px;top:223px;width:65px;height:21px;border-color:#c0c0c0;background:#ffffff;"></div>
<div class="cb" style="left:1411px;top:225px"></div>
<div class="c r" style="left:1452px;top:223px;width:61px;height:21px;border-color:#c0c0c0;background:#ffffff;"><span><span class="d">0,00</span></span></div>
<div class="ind" style="left:2px;top:244px;width:13px;height:21px"></div>
<svg style="left:6px;top:248px" width="7" height="12" viewBox="0 0 7 12"><path d="M0 0 L6 5.5 L0 11 Z" fill="#000"/></svg>
<div class="c lft" style="left:15px;top:244px;width:23px;height:21px;border-color:#c0c0c0;background:#ffff00;"></div>
<svg style="left:20px;top:245px" width="13" height="16" viewBox="0 0 13 16"><path d="M0.5 0.5 H9 L12.5 4 V15.5 H0.5 Z" fill="#dfe6f0" stroke="#a8b4c8" stroke-width="1"/>
<path d="M9 0.5 V4 H12.5" fill="#fff" stroke="#a8b4c8" stroke-width="0.8"/>
<path d="M2 3 H8" stroke="#9aa4b4" stroke-width="1"/>
<path d="M7 6 H11 V14 H6 Z" fill="#b4bccb"/>
<circle cx="8" cy="1.5" r="0.9" fill="#f0f000"/><circle cx="8" cy="4" r="0.9" fill="#f0f000"/></svg>
<div class="c r" style="left:38px;top:244px;width:45px;height:21px;border-color:#c0c0c0;background:#ffff00;"><span><span class="d">209</span></span></div>
<div class="c lft" style="left:83px;top:244px;width:135px;height:21px;border-color:#c0c0c0;background:#ffff00;"><span><span class="u">ПРИХОД НА СКЛАД</span></span></div>
<div class="c lft" style="left:218px;top:244px;width:69px;height:21px;border-color:#c0c0c0;background:#ffff00;"><span><span class="d">13.10.2025</span></span></div>
<div class="c r" style="left:287px;top:244px;width:60px;height:21px;border-color:#c0c0c0;background:#ffff00;"></div>
<div class="c lft" style="left:347px;top:244px;width:62px;height:21px;border-color:#c0c0c0;background:#ffff00;"><span><span class="d">13.10.2025</span></span></div>
<div class="c r" style="left:409px;top:244px;width:65px;height:21px;border-color:#c0c0c0;background:#ffff00;"><span><span class="d">32</span></span></div>
<div class="c lft" style="left:474px;top:244px;width:61px;height:21px;border-color:#c0c0c0;background:#ffff00;"><span><span class="d">13.10.2025</span></span></div>
<div class="c lft" style="left:535px;top:244px;width:175px;height:21px;border-color:#c0c0c0;background:#0078d7;color:#fff;outline:1px dotted #ff8c00;outline-offset:-1px;"><span><span class="u">А</span><span class="l">птекани эски остаткаси</span></span></div>
<div class="c r" style="left:710px;top:244px;width:87px;height:21px;border-color:#c0c0c0;background:#ffff00;"><span><span class="d">84 007 392,60</span></span></div>
<div class="c r" style="left:797px;top:244px;width:107px;height:21px;border-color:#c0c0c0;background:#ffff00;"><span><span class="d">84 007 391,60</span></span></div>
<div class="c r" style="left:904px;top:244px;width:124px;height:21px;border-color:#c0c0c0;background:#ffff00;"><span><span class="d">100 817 500,00</span></span></div>
<div class="c r" style="left:1028px;top:244px;width:47px;height:21px;border-color:#c0c0c0;background:#ffff00;"><span><span class="d">20,01</span></span></div>
<div class="c r" style="left:1075px;top:244px;width:123px;height:21px;border-color:#c0c0c0;background:#ffff00;"><span><span class="d">100 817 500,00</span></span></div>
<div class="c lft" style="left:1198px;top:244px;width:70px;height:21px;border-color:#c0c0c0;background:#ffff00;"><span><span class="u">АДМИНИСТРАТОР</span></span></div>
<div class="c lft" style="left:1268px;top:244px;width:65px;height:21px;border-color:#c0c0c0;background:#ffff00;"><span><span class="d">13.10.2025</span></span></div>
<div class="c lft" style="left:1333px;top:244px;width:54px;height:21px;border-color:#c0c0c0;background:#ffff00;"></div>
<div class="cb" style="left:1351px;top:246px"></div>
<div class="c lft" style="left:1387px;top:244px;width:65px;height:21px;border-color:#c0c0c0;background:#ffff00;"></div>
<div class="cb" style="left:1411px;top:246px"></div>
<div class="c r" style="left:1452px;top:244px;width:61px;height:21px;border-color:#c0c0c0;background:#ffff00;"><span><span class="d">0,00</span></span></div>
<div class="ind" style="left:2px;top:265px;width:13px;height:21px"></div>
<div class="c lft" style="left:15px;top:265px;width:23px;height:21px;border-color:#c0c0c0;background:#ffff00;"></div>
<svg style="left:20px;top:266px" width="13" height="16" viewBox="0 0 13 16"><path d="M0.5 0.5 H9 L12.5 4 V15.5 H0.5 Z" fill="#dfe6f0" stroke="#a8b4c8" stroke-width="1"/>
<path d="M9 0.5 V4 H12.5" fill="#fff" stroke="#a8b4c8" stroke-width="0.8"/>
<path d="M2 3 H8" stroke="#9aa4b4" stroke-width="1"/>
<path d="M7 6 H11 V14 H6 Z" fill="#b4bccb"/>
<circle cx="8" cy="1.5" r="0.9" fill="#f0f000"/><circle cx="8" cy="4" r="0.9" fill="#f0f000"/></svg>
<div class="c r" style="left:38px;top:265px;width:45px;height:21px;border-color:#c0c0c0;background:#ffff00;"><span><span class="d">210</span></span></div>
<div class="c lft" style="left:83px;top:265px;width:135px;height:21px;border-color:#c0c0c0;background:#ffff00;"><span><span class="u">ПРИХОД НА СКЛАД</span></span></div>
<div class="c lft" style="left:218px;top:265px;width:69px;height:21px;border-color:#c0c0c0;background:#ffff00;"><span><span class="d">13.10.2025</span></span></div>
<div class="c r" style="left:287px;top:265px;width:60px;height:21px;border-color:#c0c0c0;background:#ffff00;"></div>
<div class="c lft" style="left:347px;top:265px;width:62px;height:21px;border-color:#c0c0c0;background:#ffff00;"><span><span class="d">13.10.2025</span></span></div>
<div class="c r" style="left:409px;top:265px;width:65px;height:21px;border-color:#c0c0c0;background:#ffff00;"><span><span class="d">33</span></span></div>
<div class="c lft" style="left:474px;top:265px;width:61px;height:21px;border-color:#c0c0c0;background:#ffff00;"><span><span class="d">13.10.2025</span></span></div>
<div class="c lft" style="left:535px;top:265px;width:175px;height:21px;border-color:#c0c0c0;background:#ffff00;"><span><span class="u">А</span><span class="l">птекани эски остаткаси</span></span></div>
<div class="c r" style="left:710px;top:265px;width:87px;height:21px;border-color:#c0c0c0;background:#ffff00;"><span><span class="d">60 353 916,00</span></span></div>
<div class="c r" style="left:797px;top:265px;width:107px;height:21px;border-color:#c0c0c0;background:#ffff00;"><span><span class="d">60 353 916,00</span></span></div>
<div class="c r" style="left:904px;top:265px;width:124px;height:21px;border-color:#c0c0c0;background:#ffff00;"><span><span class="d">72 435 700,00</span></span></div>
<div class="c r" style="left:1028px;top:265px;width:47px;height:21px;border-color:#c0c0c0;background:#ffff00;"><span><span class="d">20,02</span></span></div>
<div class="c r" style="left:1075px;top:265px;width:123px;height:21px;border-color:#c0c0c0;background:#ffff00;"><span><span class="d">72 435 700,00</span></span></div>
<div class="c lft" style="left:1198px;top:265px;width:70px;height:21px;border-color:#c0c0c0;background:#ffff00;"><span><span class="u">АДМИНИСТРАТОР</span></span></div>
<div class="c lft" style="left:1268px;top:265px;width:65px;height:21px;border-color:#c0c0c0;background:#ffff00;"><span><span class="d">13.10.2025</span></span></div>
<div class="c lft" style="left:1333px;top:265px;width:54px;height:21px;border-color:#c0c0c0;background:#ffff00;"></div>
<div class="cb" style="left:1351px;top:267px"></div>
<div class="c lft" style="left:1387px;top:265px;width:65px;height:21px;border-color:#c0c0c0;background:#ffff00;"></div>
<div class="cb" style="left:1411px;top:267px"></div>
<div class="c r" style="left:1452px;top:265px;width:61px;height:21px;border-color:#c0c0c0;background:#ffff00;"><span><span class="d">0,00</span></span></div>
<div class="ind" style="left:2px;top:286px;width:13px;height:21px"></div>
<div class="c lft" style="left:15px;top:286px;width:23px;height:21px;border-color:#c0c0c0;background:#ffff00;"></div>
<svg style="left:20px;top:287px" width="13" height="16" viewBox="0 0 13 16"><path d="M0.5 0.5 H9 L12.5 4 V15.5 H0.5 Z" fill="#dfe6f0" stroke="#a8b4c8" stroke-width="1"/>
<path d="M9 0.5 V4 H12.5" fill="#fff" stroke="#a8b4c8" stroke-width="0.8"/>
<path d="M2 3 H8" stroke="#9aa4b4" stroke-width="1"/>
<path d="M7 6 H11 V14 H6 Z" fill="#b4bccb"/>
<circle cx="8" cy="1.5" r="0.9" fill="#f0f000"/><circle cx="8" cy="4" r="0.9" fill="#f0f000"/></svg>
<div class="c r" style="left:38px;top:286px;width:45px;height:21px;border-color:#c0c0c0;background:#ffff00;"><span><span class="d">211</span></span></div>
<div class="c lft" style="left:83px;top:286px;width:135px;height:21px;border-color:#c0c0c0;background:#ffff00;"><span><span class="u">ПРИХОД НА СКЛАД</span></span></div>
<div class="c lft" style="left:218px;top:286px;width:69px;height:21px;border-color:#c0c0c0;background:#ffff00;"><span><span class="d">13.10.2025</span></span></div>
<div class="c r" style="left:287px;top:286px;width:60px;height:21px;border-color:#c0c0c0;background:#ffff00;"></div>
<div class="c lft" style="left:347px;top:286px;width:62px;height:21px;border-color:#c0c0c0;background:#ffff00;"><span><span class="d">13.10.2025</span></span></div>
<div class="c r" style="left:409px;top:286px;width:65px;height:21px;border-color:#c0c0c0;background:#ffff00;"><span><span class="d">34</span></span></div>
<div class="c lft" style="left:474px;top:286px;width:61px;height:21px;border-color:#c0c0c0;background:#ffff00;"><span><span class="d">13.10.2025</span></span></div>
<div class="c lft" style="left:535px;top:286px;width:175px;height:21px;border-color:#c0c0c0;background:#ffff00;"><span><span class="u">А</span><span class="l">птекани эски остаткаси</span></span></div>
<div class="c r" style="left:710px;top:286px;width:87px;height:21px;border-color:#c0c0c0;background:#ffff00;"><span><span class="d">41 410 243,84</span></span></div>
<div class="c r" style="left:797px;top:286px;width:107px;height:21px;border-color:#c0c0c0;background:#ffff00;"><span><span class="d">41 410 243,84</span></span></div>
<div class="c r" style="left:904px;top:286px;width:124px;height:21px;border-color:#c0c0c0;background:#ffff00;"><span><span class="d">49 699 800,00</span></span></div>
<div class="c r" style="left:1028px;top:286px;width:47px;height:21px;border-color:#c0c0c0;background:#ffff00;"><span><span class="d">20,02</span></span></div>
<div class="c r" style="left:1075px;top:286px;width:123px;height:21px;border-color:#c0c0c0;background:#ffff00;"><span><span class="d">49 699 800,00</span></span></div>
<div class="c lft" style="left:1198px;top:286px;width:70px;height:21px;border-color:#c0c0c0;background:#ffff00;"><span><span class="u">АДМИНИСТРАТОР</span></span></div>
<div class="c lft" style="left:1268px;top:286px;width:65px;height:21px;border-color:#c0c0c0;background:#ffff00;"><span><span class="d">13.10.2025</span></span></div>
<div class="c lft" style="left:1333px;top:286px;width:54px;height:21px;border-color:#c0c0c0;background:#ffff00;"></div>
<div class="cb" style="left:1351px;top:288px"></div>
<div class="c lft" style="left:1387px;top:286px;width:65px;height:21px;border-color:#c0c0c0;background:#ffff00;"></div>
<div class="cb" style="left:1411px;top:288px"></div>
<div class="c r" style="left:1452px;top:286px;width:61px;height:21px;border-color:#c0c0c0;background:#ffff00;"><span><span class="d">0,00</span></span></div>
<div style="left:14px;top:307px;width:1px;height:152px;background:linear-gradient(#cccccc 0,#cccccc 78%,#fff 100%)"></div>
<div style="left:37px;top:307px;width:1px;height:152px;background:linear-gradient(#cccccc 0,#cccccc 78%,#fff 100%)"></div>
<div style="left:82px;top:307px;width:1px;height:152px;background:linear-gradient(#cccccc 0,#cccccc 78%,#fff 100%)"></div>
<div style="left:217px;top:307px;width:1px;height:152px;background:linear-gradient(#cccccc 0,#cccccc 78%,#fff 100%)"></div>
<div style="left:286px;top:307px;width:1px;height:152px;background:linear-gradient(#cccccc 0,#cccccc 78%,#fff 100%)"></div>
<div style="left:346px;top:307px;width:1px;height:152px;background:linear-gradient(#cccccc 0,#cccccc 78%,#fff 100%)"></div>
<div style="left:408px;top:307px;width:1px;height:152px;background:linear-gradient(#cccccc 0,#cccccc 78%,#fff 100%)"></div>
<div style="left:473px;top:307px;width:1px;height:152px;background:linear-gradient(#cccccc 0,#cccccc 78%,#fff 100%)"></div>
<div style="left:534px;top:307px;width:1px;height:152px;background:linear-gradient(#cccccc 0,#cccccc 78%,#fff 100%)"></div>
<div style="left:709px;top:307px;width:1px;height:152px;background:linear-gradient(#cccccc 0,#cccccc 78%,#fff 100%)"></div>
<div style="left:796px;top:307px;width:1px;height:152px;background:linear-gradient(#cccccc 0,#cccccc 78%,#fff 100%)"></div>
<div style="left:903px;top:307px;width:1px;height:152px;background:linear-gradient(#cccccc 0,#cccccc 78%,#fff 100%)"></div>
<div style="left:1027px;top:307px;width:1px;height:152px;background:linear-gradient(#cccccc 0,#cccccc 78%,#fff 100%)"></div>
<div style="left:1074px;top:307px;width:1px;height:152px;background:linear-gradient(#cccccc 0,#cccccc 78%,#fff 100%)"></div>
<div style="left:1197px;top:307px;width:1px;height:152px;background:linear-gradient(#cccccc 0,#cccccc 78%,#fff 100%)"></div>
<div style="left:1267px;top:307px;width:1px;height:152px;background:linear-gradient(#cccccc 0,#cccccc 78%,#fff 100%)"></div>
<div style="left:1332px;top:307px;width:1px;height:152px;background:linear-gradient(#cccccc 0,#cccccc 78%,#fff 100%)"></div>
<div style="left:1386px;top:307px;width:1px;height:152px;background:linear-gradient(#cccccc 0,#cccccc 78%,#fff 100%)"></div>
<div style="left:1451px;top:307px;width:1px;height:152px;background:linear-gradient(#cccccc 0,#cccccc 78%,#fff 100%)"></div>
<div style="left:1512px;top:307px;width:1px;height:152px;background:linear-gradient(#cccccc 0,#cccccc 78%,#fff 100%)"></div>
<div style="left:2px;top:459px;width:1511px;height:1px;background:#000"></div>
<div class="ind" style="left:2px;top:460px;width:13px;height:21px"></div>
<div class="c lft" style="left:15px;top:460px;width:23px;height:21px;border-color:#c0c0c0;background:#fff;"></div>
<div class="c r" style="left:38px;top:460px;width:45px;height:21px;border-color:#c0c0c0;background:#fff;"><span><span class="d">6</span></span></div>
<div class="c lft" style="left:83px;top:460px;width:135px;height:21px;border-color:#c0c0c0;background:#fff;"></div>
<div class="c lft" style="left:218px;top:460px;width:69px;height:21px;border-color:#c0c0c0;background:#fff;"></div>
<div class="c lft" style="left:287px;top:460px;width:60px;height:21px;border-color:#c0c0c0;background:#fff;"></div>
<div class="c lft" style="left:347px;top:460px;width:62px;height:21px;border-color:#c0c0c0;background:#fff;"></div>
<div class="c lft" style="left:409px;top:460px;width:65px;height:21px;border-color:#c0c0c0;background:#fff;"></div>
<div class="c lft" style="left:474px;top:460px;width:61px;height:21px;border-color:#c0c0c0;background:#fff;"></div>
<div class="c lft" style="left:535px;top:460px;width:175px;height:21px;border-color:#c0c0c0;background:#fff;"></div>
<div class="c r" style="left:710px;top:460px;width:87px;height:21px;border-color:#c0c0c0;background:#fff;"><span><span class="d">220 540 545,74</span></span></div>
<div class="c r" style="left:797px;top:460px;width:107px;height:21px;border-color:#c0c0c0;background:#fff;"><span><span class="d">220 540 544,74</span></span></div>
<div class="c r" style="left:904px;top:460px;width:124px;height:21px;border-color:#c0c0c0;background:#fff;"><span><span class="d">259 466 619,00</span></span></div>
<div class="c r" style="left:1028px;top:460px;width:47px;height:21px;border-color:#c0c0c0;background:#fff;"><span><span class="d">17,43</span></span></div>
<div class="c r" style="left:1075px;top:460px;width:123px;height:21px;border-color:#c0c0c0;background:#fff;"><span><span class="d">259 470 060,00</span></span></div>
<div class="c lft" style="left:1198px;top:460px;width:70px;height:21px;border-color:#c0c0c0;background:#fff;"></div>
<div class="c lft" style="left:1268px;top:460px;width:65px;height:21px;border-color:#c0c0c0;background:#fff;"></div>
<div class="c lft" style="left:1333px;top:460px;width:54px;height:21px;border-color:#c0c0c0;background:#fff;"></div>
<div class="c lft" style="left:1387px;top:460px;width:65px;height:21px;border-color:#c0c0c0;background:#fff;"></div>
<div class="c r" style="left:1452px;top:460px;width:61px;height:21px;border-color:#c0c0c0;background:#fff;"><span><span class="d">0,00</span></span></div>
<div style="left:1513px;top:129px;width:21px;height:352px;background:#f0f0f0"></div>
<svg style="left:1518px;top:136px" width="11" height="7" viewBox="0 0 11 7"><path d="M1 6.2 L5.5 1.7 L10 6.2" stroke="#606060" stroke-width="2.1" fill="none"/></svg>
<div style="left:1514px;top:234px;width:19px;height:170px;background:#cdcdcd"></div>
<svg style="left:1518px;top:466px" width="11" height="7" viewBox="0 0 11 7"><path d="M1 0.8 L5.5 5.3 L10 0.8" stroke="#606060" stroke-width="2.1" fill="none"/></svg>
<div style="left:2px;top:481px;width:1533px;height:6px;background:#f0f0f0"></div>
<div style="left:2px;top:482px;width:1533px;height:1px;background:#fff"></div>
<div style="left:2px;top:487px;width:1533px;height:1px;background:#a0a0a0"></div>
<div style="left:2px;top:488px;width:1533px;height:1px;background:#696969"></div>
<div style="left:2px;top:489px;width:1511px;height:284px;background:#fff"></div>
<div class="hc" style="left:2px;top:489px;width:13px;height:68px;"></div>
<svg style="left:5px;top:521px" width="8" height="5" viewBox="0 0 8 5"><path d="M0 0 H7 L3.5 4 Z" fill="#000"/></svg>
<div class="hc" style="left:15px;top:489px;width:57px;height:68px;"><span><span class="u">ИД</span></span></div>
<div class="hc" style="left:72px;top:489px;width:319px;height:68px;"><span><span class="u">Н</span><span class="l">аименование</span></span></div>
<div class="hc" style="left:391px;top:489px;width:102px;height:68px;"><span><span class="u">С</span><span class="l">ерия</span></span></div>
<div class="hc" style="left:493px;top:489px;width:79px;height:68px;"><span><span class="u">С</span><span class="l">рок год</span><span class="d">.</span></span></div>
<div class="hc" style="left:572px;top:489px;width:106px;height:68px;"><span><span class="u">К</span><span class="l">ол</span><span class="d">-</span><span class="l">во</span></span></div>
<div class="hc" style="left:678px;top:489px;width:538px;height:42px;"><span><span class="u">П</span><span class="l">риходная</span></span></div>
<div class="hc" style="left:678px;top:531px;width:156px;height:26px;"><span><span class="u">Ц</span><span class="l">ена</span></span></div>
<div class="hc" style="left:834px;top:531px;width:112px;height:26px;"><span><span class="u">Ц</span><span class="l">ена с </span><span class="u">НДС</span></span></div>
<div class="hc" style="left:946px;top:531px;width:151px;height:26px;"><span><span class="u">С</span><span class="l">умма</span></span></div>
<div class="hc" style="left:1097px;top:531px;width:119px;height:26px;"><span><span class="u">С</span><span class="l">умма </span><span class="u">НДС</span></span></div>
<div class="hc" style="left:1216px;top:489px;width:238px;height:42px;"><span><span class="u">С</span><span class="l">о скидкой</span></span></div>
<div class="hc" style="left:1216px;top:531px;width:95px;height:26px;"><span><span class="u">Ц</span><span class="l">ена</span></span></div>
<div class="hc" style="left:1311px;top:531px;width:143px;height:26px;"><span><span class="u">С</span><span class="l">умма</span></span></div>
<div class="hc" style="left:1454px;top:489px;width:60px;height:68px;justify-content:flex-start;padding-left:3px"><span><span class="u">Н</span><span class="l">аценка</span></span></div>
<div class="ind" style="left:2px;top:557px;width:13px;height:21px"></div>
<svg style="left:6px;top:561px" width="7" height="12" viewBox="0 0 7 12"><path d="M0 0 L6 5.5 L0 11 Z" fill="#000"/></svg>
<div class="c r" style="left:15px;top:557px;width:57px;height:21px;border-color:#c0c0c0;background:#a0a0a0;color:#fff;"><span><span class="d">29670</span></span></div>
<div class="c lft" style="left:72px;top:557px;width:319px;height:21px;border-color:#c0c0c0;background:#dbdba6;"><span><span class="u">АВТОРИЯ ТАБ </span><span class="d">25</span><span class="u">МГ </span><span class="d">№30\</span><span class="u">PSYCHOTROPICS INDIA</span></span></div>
<div class="c lft" style="left:391px;top:557px;width:102px;height:21px;border-color:#c0c0c0;background:#dbdba6;"><span><span class="u">ABA</span><span class="d">44013</span></span></div>
<div class="c lft" style="left:493px;top:557px;width:79px;height:21px;border-color:#c0c0c0;background:#dbdba6;"><span><span class="d">01.12.2027</span></span></div>
<div class="c r" style="left:572px;top:557px;width:106px;height:21px;border-color:#c0c0c0;background:#dbdba6;"><span><span class="d">5</span></span></div>
<div class="c r" style="left:678px;top:557px;width:156px;height:21px;border-color:#c0c0c0;background:#dbdba6;"><span><span class="d">55 099,00</span></span></div>
<div class="c r" style="left:834px;top:557px;width:112px;height:21px;border-color:#c0c0c0;background:#dbdba6;"><span><span class="d">61 710,88</span></span></div>
<div class="c r" style="left:946px;top:557px;width:151px;height:21px;border-color:#c0c0c0;background:#dbdba6;"><span><span class="d">308 554,40</span></span></div>
<div class="c r" style="left:1097px;top:557px;width:119px;height:21px;border-color:#c0c0c0;background:#dbdba6;"><span><span class="d">33 059,40</span></span></div>
<div class="c r" style="left:1216px;top:557px;width:95px;height:21px;border-color:#c0c0c0;background:#dbdba6;"><span><span class="d">61 710,88</span></span></div>
<div class="c r" style="left:1311px;top:557px;width:143px;height:21px;border-color:#c0c0c0;background:#dbdba6;"><span><span class="d">308 554,40</span></span></div>
<div class="c lft" style="left:1454px;top:557px;width:60px;height:21px;border-color:#c0c0c0;background:#dbdba6;"><span><span class="u">П</span><span class="l">риходная</span></span></div>
<div class="ind" style="left:2px;top:578px;width:13px;height:21px"></div>
<div class="c r" style="left:15px;top:578px;width:57px;height:21px;border-color:#c0c0c0;background:#ffff00;"><span><span class="d">29437</span></span></div>
<div class="c lft" style="left:72px;top:578px;width:319px;height:21px;border-color:#c0c0c0;background:#ffff00;"><span><span class="u">АДАПТОЛ КАПС </span><span class="d">300</span><span class="u">МГ </span><span class="d">№20\</span><span class="u">ОЛАЙН ФАРМ</span><span class="d">, </span><span class="u">ЛАТВИЯ</span></span></div>
<div class="c lft" style="left:391px;top:578px;width:102px;height:21px;border-color:#c0c0c0;background:#ffff00;"><span><span class="d">80224</span></span></div>
<div class="c lft" style="left:493px;top:578px;width:79px;height:21px;border-color:#c0c0c0;background:#ffff00;"><span><span class="d">01.02.2027</span></span></div>
<div class="c r" style="left:572px;top:578px;width:106px;height:21px;border-color:#c0c0c0;background:#ffff00;"><span><span class="d">2</span></span></div>
<div class="c r" style="left:678px;top:578px;width:156px;height:21px;border-color:#c0c0c0;background:#ffff00;"><span><span class="d">78 681,00</span></span></div>
<div class="c r" style="left:834px;top:578px;width:112px;height:21px;border-color:#c0c0c0;background:#ffff00;"><span><span class="d">88 122,72</span></span></div>
<div class="c r" style="left:946px;top:578px;width:151px;height:21px;border-color:#c0c0c0;background:#ffff00;"><span><span class="d">176 245,44</span></span></div>
<div class="c r" style="left:1097px;top:578px;width:119px;height:21px;border-color:#c0c0c0;background:#ffff00;"><span><span class="d">18 883,44</span></span></div>
<div class="c r" style="left:1216px;top:578px;width:95px;height:21px;border-color:#c0c0c0;background:#ffff00;"><span><span class="d">88 122,72</span></span></div>
<div class="c r" style="left:1311px;top:578px;width:143px;height:21px;border-color:#c0c0c0;background:#ffff00;"><span><span class="d">176 245,44</span></span></div>
<div class="c lft" style="left:1454px;top:578px;width:60px;height:21px;border-color:#c0c0c0;background:#ffff00;"><span><span class="u">П</span><span class="l">риходная</span></span></div>
<div class="ind" style="left:2px;top:599px;width:13px;height:21px"></div>
<div class="c r" style="left:15px;top:599px;width:57px;height:21px;border-color:#c0c0c0;background:#ffff00;"><span><span class="d">29436</span></span></div>
<div class="c lft" style="left:72px;top:599px;width:319px;height:21px;border-color:#c0c0c0;background:#ffff00;"><span><span class="u">АДАПТОЛ ТАБ </span><span class="d">500</span><span class="u">МГ </span><span class="d">№20\</span><span class="u">ОЛАЙН ФАРМ</span><span class="d">, </span><span class="u">ЛАТВИЯ</span></span></div>
<div class="c lft" style="left:391px;top:599px;width:102px;height:21px;border-color:#c0c0c0;background:#ffff00;"><span><span class="d">821123</span></span></div>
<div class="c lft" style="left:493px;top:599px;width:79px;height:21px;border-color:#c0c0c0;background:#ffff00;"><span><span class="d">01.11.2027</span></span></div>
<div class="c r" style="left:572px;top:599px;width:106px;height:21px;border-color:#c0c0c0;background:#ffff00;"><span><span class="d">2</span></span></div>
<div class="c r" style="left:678px;top:599px;width:156px;height:21px;border-color:#c0c0c0;background:#ffff00;"><span><span class="d">103 561,00</span></span></div>
<div class="c r" style="left:834px;top:599px;width:112px;height:21px;border-color:#c0c0c0;background:#ffff00;"><span><span class="d">115 988,32</span></span></div>
<div class="c r" style="left:946px;top:599px;width:151px;height:21px;border-color:#c0c0c0;background:#ffff00;"><span><span class="d">231 976,64</span></span></div>
<div class="c r" style="left:1097px;top:599px;width:119px;height:21px;border-color:#c0c0c0;background:#ffff00;"><span><span class="d">24 854,64</span></span></div>
<div class="c r" style="left:1216px;top:599px;width:95px;height:21px;border-color:#c0c0c0;background:#ffff00;"><span><span class="d">115 988,32</span></span></div>
<div class="c r" style="left:1311px;top:599px;width:143px;height:21px;border-color:#c0c0c0;background:#ffff00;"><span><span class="d">231 976,64</span></span></div>
<div class="c lft" style="left:1454px;top:599px;width:60px;height:21px;border-color:#c0c0c0;background:#ffff00;"><span><span class="u">П</span><span class="l">риходная</span></span></div>
<div class="ind" style="left:2px;top:620px;width:13px;height:21px"></div>
<div class="c r" style="left:15px;top:620px;width:57px;height:21px;border-color:#c0c0c0;background:#ffff00;"><span><span class="d">29485</span></span></div>
<div class="c lft" style="left:72px;top:620px;width:319px;height:21px;border-color:#c0c0c0;background:#ffff00;"><span><span class="u">АЗАРГА ГЛ</span><span class="d">/</span><span class="u">КАПЛИ </span><span class="d">5</span><span class="u">МЛ</span><span class="d">\</span><span class="u">АЛКОН</span><span class="d">-</span><span class="u">КУВРЕР</span><span class="d">, </span><span class="u">БЕЛЬГИЯ</span></span></div>
<div class="c lft" style="left:391px;top:620px;width:102px;height:21px;border-color:#c0c0c0;background:#ffff00;"><span><span class="u">VHV</span><span class="d">74</span><span class="u">E</span></span></div>
<div class="c lft" style="left:493px;top:620px;width:79px;height:21px;border-color:#c0c0c0;background:#ffff00;"><span><span class="d">01.05.2026</span></span></div>
<div class="c r" style="left:572px;top:620px;width:106px;height:21px;border-color:#c0c0c0;background:#ffff00;"><span><span class="d">3</span></span></div>
<div class="c r" style="left:678px;top:620px;width:156px;height:21px;border-color:#c0c0c0;background:#ffff00;"><span><span class="d">125 243,00</span></span></div>
<div class="c r" style="left:834px;top:620px;width:112px;height:21px;border-color:#c0c0c0;background:#ffff00;"><span><span class="d">140 272,16</span></span></div>
<div class="c r" style="left:946px;top:620px;width:151px;height:21px;border-color:#c0c0c0;background:#ffff00;"><span><span class="d">420 816,48</span></span></div>
<div class="c r" style="left:1097px;top:620px;width:119px;height:21px;border-color:#c0c0c0;background:#ffff00;"><span><span class="d">45 087,48</span></span></div>
<div class="c r" style="left:1216px;top:620px;width:95px;height:21px;border-color:#c0c0c0;background:#ffff00;"><span><span class="d">140 272,16</span></span></div>
<div class="c r" style="left:1311px;top:620px;width:143px;height:21px;border-color:#c0c0c0;background:#ffff00;"><span><span class="d">420 816,48</span></span></div>
<div class="c lft" style="left:1454px;top:620px;width:60px;height:21px;border-color:#c0c0c0;background:#ffff00;"><span><span class="u">П</span><span class="l">риходная</span></span></div>
<div class="ind" style="left:2px;top:641px;width:13px;height:21px"></div>
<div class="c r" style="left:15px;top:641px;width:57px;height:21px;border-color:#c0c0c0;background:#ffff00;"><span><span class="d">29570</span></span></div>
<div class="c lft" style="left:72px;top:641px;width:319px;height:21px;border-color:#c0c0c0;background:#ffff00;"><span><span class="u">АЗИБИОТ ТАБ </span><span class="d">500</span><span class="u">МГ </span><span class="d">№3\</span><span class="u">КРКА</span><span class="d">, </span><span class="u">СЛОВЕНИЯ</span></span></div>
<div class="c lft" style="left:391px;top:641px;width:102px;height:21px;border-color:#c0c0c0;background:#ffff00;"><span><span class="u">SM</span><span class="d">5323</span></span></div>
<div class="c lft" style="left:493px;top:641px;width:79px;height:21px;border-color:#c0c0c0;background:#ffff00;"><span><span class="d">01.10.2028</span></span></div>
<div class="c r" style="left:572px;top:641px;width:106px;height:21px;border-color:#c0c0c0;background:#ffff00;"><span><span class="d">5</span></span></div>
<div class="c r" style="left:678px;top:641px;width:156px;height:21px;border-color:#c0c0c0;background:#ffff00;"><span><span class="d">35 981,00</span></span></div>
<div class="c r" style="left:834px;top:641px;width:112px;height:21px;border-color:#c0c0c0;background:#ffff00;"><span><span class="d">40 298,72</span></span></div>
<div class="c r" style="left:946px;top:641px;width:151px;height:21px;border-color:#c0c0c0;background:#ffff00;"><span><span class="d">201 493,60</span></span></div>
<div class="c r" style="left:1097px;top:641px;width:119px;height:21px;border-color:#c0c0c0;background:#ffff00;"><span><span class="d">21 588,60</span></span></div>
<div class="c r" style="left:1216px;top:641px;width:95px;height:21px;border-color:#c0c0c0;background:#ffff00;"><span><span class="d">40 298,72</span></span></div>
<div class="c r" style="left:1311px;top:641px;width:143px;height:21px;border-color:#c0c0c0;background:#ffff00;"><span><span class="d">201 493,60</span></span></div>
<div class="c lft" style="left:1454px;top:641px;width:60px;height:21px;border-color:#c0c0c0;background:#ffff00;"><span><span class="u">П</span><span class="l">риходная</span></span></div>
<div class="ind" style="left:2px;top:662px;width:13px;height:21px"></div>
<div class="c r" style="left:15px;top:662px;width:57px;height:21px;border-color:#c0c0c0;background:#ffff00;"><span><span class="d">29455</span></span></div>
<div class="c lft" style="left:72px;top:662px;width:319px;height:21px;border-color:#c0c0c0;background:#ffff00;"><span><span class="u">АЗИМАК КАПС </span><span class="d">250</span><span class="u">МГ </span><span class="d">№6\</span><span class="u">GMP</span><span class="d">, </span><span class="u">ГРУЗИЯ</span></span></div>
<div class="c lft" style="left:391px;top:662px;width:102px;height:21px;border-color:#c0c0c0;background:#ffff00;"><span><span class="d">89050724</span></span></div>
<div class="c lft" style="left:493px;top:662px;width:79px;height:21px;border-color:#c0c0c0;background:#ffff00;"><span><span class="d">01.07.2027</span></span></div>
<div class="c r" style="left:572px;top:662px;width:106px;height:21px;border-color:#c0c0c0;background:#ffff00;"><span><span class="d">15</span></span></div>
<div class="c r" style="left:678px;top:662px;width:156px;height:21px;border-color:#c0c0c0;background:#ffff00;"><span><span class="d">44 188,00</span></span></div>
<div class="c r" style="left:834px;top:662px;width:112px;height:21px;border-color:#c0c0c0;background:#ffff00;"><span><span class="d">49 490,56</span></span></div>
<div class="c r" style="left:946px;top:662px;width:151px;height:21px;border-color:#c0c0c0;background:#ffff00;"><span><span class="d">742 358,40</span></span></div>
<div class="c r" style="left:1097px;top:662px;width:119px;height:21px;border-color:#c0c0c0;background:#ffff00;"><span><span class="d">79 538,40</span></span></div>
<div class="c r" style="left:1216px;top:662px;width:95px;height:21px;border-color:#c0c0c0;background:#ffff00;"><span><span class="d">49 490,56</span></span></div>
<div class="c r" style="left:1311px;top:662px;width:143px;height:21px;border-color:#c0c0c0;background:#ffff00;"><span><span class="d">742 358,40</span></span></div>
<div class="c lft" style="left:1454px;top:662px;width:60px;height:21px;border-color:#c0c0c0;background:#ffff00;"><span><span class="u">П</span><span class="l">риходная</span></span></div>
<div class="ind" style="left:2px;top:683px;width:13px;height:21px"></div>
<div class="c r" style="left:15px;top:683px;width:57px;height:21px;border-color:#c0c0c0;background:#ffff00;"><span><span class="d">29456</span></span></div>
<div class="c lft" style="left:72px;top:683px;width:319px;height:21px;border-color:#c0c0c0;background:#ffff00;"><span><span class="u">АЗИМАК КАПС </span><span class="d">500</span><span class="u">МГ </span><span class="d">№3\</span><span class="u">GMP</span><span class="d">, </span><span class="u">ГРУЗИЯ</span></span></div>
<div class="c lft" style="left:391px;top:683px;width:102px;height:21px;border-color:#c0c0c0;background:#ffff00;"><span><span class="d">90231024</span></span></div>
<div class="c lft" style="left:493px;top:683px;width:79px;height:21px;border-color:#c0c0c0;background:#ffff00;"><span><span class="d">01.10.2027</span></span></div>
<div class="c r" style="left:572px;top:683px;width:106px;height:21px;border-color:#c0c0c0;background:#ffff00;"><span><span class="d">24</span></span></div>
<div class="c r" style="left:678px;top:683px;width:156px;height:21px;border-color:#c0c0c0;background:#ffff00;"><span><span class="d">44 188,00</span></span></div>
<div class="c r" style="left:834px;top:683px;width:112px;height:21px;border-color:#c0c0c0;background:#ffff00;"><span><span class="d">49 490,56</span></span></div>
<div class="c r" style="left:946px;top:683px;width:151px;height:21px;border-color:#c0c0c0;background:#ffff00;"><span><span class="d">1 187 773,44</span></span></div>
<div class="c r" style="left:1097px;top:683px;width:119px;height:21px;border-color:#c0c0c0;background:#ffff00;"><span><span class="d">127 261,44</span></span></div>
<div class="c r" style="left:1216px;top:683px;width:95px;height:21px;border-color:#c0c0c0;background:#ffff00;"><span><span class="d">49 490,56</span></span></div>
<div class="c r" style="left:1311px;top:683px;width:143px;height:21px;border-color:#c0c0c0;background:#ffff00;"><span><span class="d">1 187 773,44</span></span></div>
<div class="c lft" style="left:1454px;top:683px;width:60px;height:21px;border-color:#c0c0c0;background:#ffff00;"><span><span class="u">П</span><span class="l">риходная</span></span></div>
<div class="ind" style="left:2px;top:704px;width:13px;height:21px"></div>
<div class="c r" style="left:15px;top:704px;width:57px;height:21px;border-color:#c0c0c0;background:#ffff00;"><span><span class="d">29544</span></span></div>
<div class="c lft" style="left:72px;top:704px;width:319px;height:21px;border-color:#c0c0c0;background:#ffff00;"><span><span class="u">АЗИМЕД КАПС </span><span class="d">250</span><span class="u">МГ </span><span class="d">№6\</span><span class="u">АРТЕРИУМ</span><span class="d">, </span><span class="u">УКРАИНА</span></span></div>
<div class="c lft" style="left:391px;top:704px;width:102px;height:21px;border-color:#c0c0c0;background:#ffff00;"><span><span class="d">99974</span></span></div>
<div class="c lft" style="left:493px;top:704px;width:79px;height:21px;border-color:#c0c0c0;background:#ffff00;"><span><span class="d">01.06.2027</span></span></div>
<div class="c r" style="left:572px;top:704px;width:106px;height:21px;border-color:#c0c0c0;background:#ffff00;"><span><span class="d">15</span></span></div>
<div class="c r" style="left:678px;top:704px;width:156px;height:21px;border-color:#c0c0c0;background:#ffff00;"><span><span class="d">37 294,00</span></span></div>
<div class="c r" style="left:834px;top:704px;width:112px;height:21px;border-color:#c0c0c0;background:#ffff00;"><span><span class="d">41 769,28</span></span></div>
<div class="c r" style="left:946px;top:704px;width:151px;height:21px;border-color:#c0c0c0;background:#ffff00;"><span><span class="d">626 539,20</span></span></div>
<div class="c r" style="left:1097px;top:704px;width:119px;height:21px;border-color:#c0c0c0;background:#ffff00;"><span><span class="d">67 129,20</span></span></div>
<div class="c r" style="left:1216px;top:704px;width:95px;height:21px;border-color:#c0c0c0;background:#ffff00;"><span><span class="d">41 769,28</span></span></div>
<div class="c r" style="left:1311px;top:704px;width:143px;height:21px;border-color:#c0c0c0;background:#ffff00;"><span><span class="d">626 539,20</span></span></div>
<div class="c lft" style="left:1454px;top:704px;width:60px;height:21px;border-color:#c0c0c0;background:#ffff00;"><span><span class="u">П</span><span class="l">риходная</span></span></div>
<div class="ind" style="left:2px;top:725px;width:13px;height:21px"></div>
<div class="c r" style="left:15px;top:725px;width:57px;height:21px;border-color:#c0c0c0;background:#ffff00;"><span><span class="d">29726</span></span></div>
<div class="c lft" style="left:72px;top:725px;width:319px;height:21px;border-color:#c0c0c0;background:#ffff00;"><span><span class="u">АЗИТРО</span><span class="d">-</span><span class="u">САНТО ТАБ </span><span class="d">500</span><span class="u">МГ </span><span class="d">№3\</span><span class="u">ХИМФАРМ</span><span class="d">, </span><span class="u">КАЗАХСТАН</span></span></div>
<div class="c lft" style="left:391px;top:725px;width:102px;height:21px;border-color:#c0c0c0;background:#ffff00;"><span><span class="d">24100455</span></span></div>
<div class="c lft" style="left:493px;top:725px;width:79px;height:21px;border-color:#c0c0c0;background:#ffff00;"><span><span class="d">01.10.2027</span></span></div>
<div class="c r" style="left:572px;top:725px;width:106px;height:21px;border-color:#c0c0c0;background:#ffff00;"><span><span class="d">1</span></span></div>
<div class="c r" style="left:678px;top:725px;width:156px;height:21px;border-color:#c0c0c0;background:#ffff00;"><span><span class="d">15 049,00</span></span></div>
<div class="c r" style="left:834px;top:725px;width:112px;height:21px;border-color:#c0c0c0;background:#ffff00;"><span><span class="d">16 854,88</span></span></div>
<div class="c r" style="left:946px;top:725px;width:151px;height:21px;border-color:#c0c0c0;background:#ffff00;"><span><span class="d">16 854,88</span></span></div>
<div class="c r" style="left:1097px;top:725px;width:119px;height:21px;border-color:#c0c0c0;background:#ffff00;"><span><span class="d">1 805,88</span></span></div>
<div class="c r" style="left:1216px;top:725px;width:95px;height:21px;border-color:#c0c0c0;background:#ffff00;"><span><span class="d">16 854,88</span></span></div>
<div class="c r" style="left:1311px;top:725px;width:143px;height:21px;border-color:#c0c0c0;background:#ffff00;"><span><span class="d">16 854,88</span></span></div>
<div class="c lft" style="left:1454px;top:725px;width:60px;height:21px;border-color:#c0c0c0;background:#ffff00;"><span><span class="u">П</span><span class="l">риходная</span></span></div>
<div style="left:14px;top:746px;width:1px;height:5px;background:#c0c0c0"></div>
<div style="left:71px;top:746px;width:1px;height:5px;background:#c0c0c0"></div>
<div style="left:390px;top:746px;width:1px;height:5px;background:#c0c0c0"></div>
<div style="left:492px;top:746px;width:1px;height:5px;background:#c0c0c0"></div>
<div style="left:571px;top:746px;width:1px;height:5px;background:#c0c0c0"></div>
<div style="left:677px;top:746px;width:1px;height:5px;background:#c0c0c0"></div>
<div style="left:833px;top:746px;width:1px;height:5px;background:#c0c0c0"></div>
<div style="left:945px;top:746px;width:1px;height:5px;background:#c0c0c0"></div>
<div style="left:1096px;top:746px;width:1px;height:5px;background:#c0c0c0"></div>
<div style="left:1215px;top:746px;width:1px;height:5px;background:#c0c0c0"></div>
<div style="left:1310px;top:746px;width:1px;height:5px;background:#c0c0c0"></div>
<div style="left:1453px;top:746px;width:1px;height:5px;background:#c0c0c0"></div>
<div style="left:2px;top:746px;width:13px;height:5px;background:#fff;border-right:1px solid #000"></div>
<div style="left:2px;top:751px;width:1511px;height:1px;background:#000"></div>
<div class="ind" style="left:2px;top:752px;width:13px;height:21px"></div>
<div class="c lft" style="left:15px;top:752px;width:57px;height:21px;border-color:#c0c0c0;background:#fff;"></div>
<div class="c lft" style="left:72px;top:752px;width:319px;height:21px;border-color:#c0c0c0;background:#fff;"><span><span class="d">311</span></span></div>
<div class="c lft" style="left:391px;top:752px;width:102px;height:21px;border-color:#c0c0c0;background:#fff;"></div>
<div class="c lft" style="left:493px;top:752px;width:79px;height:21px;border-color:#c0c0c0;background:#fff;"></div>
<div class="c r" style="left:572px;top:752px;width:106px;height:21px;border-color:#c0c0c0;background:#fff;"><span><span class="d">1642</span></span></div>
<div class="c lft" style="left:678px;top:752px;width:156px;height:21px;border-color:#c0c0c0;background:#fff;"></div>
<div class="c lft" style="left:834px;top:752px;width:112px;height:21px;border-color:#c0c0c0;background:#fff;"></div>
<div class="c r" style="left:946px;top:752px;width:151px;height:21px;border-color:#c0c0c0;background:#fff;"><span><span class="d">84 007 392,60</span></span></div>
<div class="c r" style="left:1097px;top:752px;width:119px;height:21px;border-color:#c0c0c0;background:#fff;"><span><span class="d">8 990 346,60</span></span></div>
<div class="c lft" style="left:1216px;top:752px;width:95px;height:21px;border-color:#c0c0c0;background:#fff;"></div>
<div class="c r" style="left:1311px;top:752px;width:143px;height:21px;border-color:#c0c0c0;background:#fff;"><span><span class="d">84 007 391,60</span></span></div>
<div class="c lft" style="left:1454px;top:752px;width:60px;height:21px;border-color:#c0c0c0;background:#fff;"></div>
<div style="left:1513px;top:489px;width:21px;height:284px;background:#f0f0f0"></div>
<svg style="left:1518px;top:496px" width="11" height="7" viewBox="0 0 11 7"><path d="M1 6.2 L5.5 1.7 L10 6.2" stroke="#606060" stroke-width="2.1" fill="none"/></svg>
<div style="left:1514px;top:510px;width:19px;height:21px;background:#cdcdcd"></div>
<svg style="left:1518px;top:758px" width="11" height="7" viewBox="0 0 11 7"><path d="M1 0.8 L5.5 5.3 L10 0.8" stroke="#606060" stroke-width="2.1" fill="none"/></svg>
<div style="left:2px;top:773px;width:1533px;height:23px;background:#f0f0f0"></div>
<div style="left:24px;top:774px;width:669px;height:19px;background:#cdcdcd"></div>
<svg style="left:9px;top:778px" width="7" height="11" viewBox="0 0 7 11"><path d="M6.2 1 L1.7 5.5 L6.2 10" stroke="#606060" stroke-width="2.1" fill="none"/></svg>
<svg style="left:1497px;top:778px" width="7" height="11" viewBox="0 0 7 11"><path d="M0.8 1 L5.3 5.5 L0.8 10" stroke="#606060" stroke-width="2.1" fill="none"/></svg>
<svg style="left:1520px;top:781px" width="12" height="12" viewBox="0 0 12 12"><g fill="#c4c4c4"><rect x="8.5" y="0" width="3" height="3"/><rect x="4.5" y="4" width="3" height="3"/><rect x="8.5" y="4" width="3" height="3"/><rect x="0.5" y="8" width="3" height="3"/><rect x="4.5" y="8" width="3" height="3"/><rect x="8.5" y="8" width="3" height="3"/></g></svg>
<div style="left:0px;top:0px;width:1537px;height:1px;background:#777"></div>
<div style="left:0px;top:0px;width:1px;height:797px;background:#6e6e6e"></div>
<div style="left:1px;top:39px;width:1px;height:758px;background:#a0a0a0"></div>
<div style="left:1535px;top:39px;width:1px;height:758px;background:#a0a0a0"></div>
<div style="left:1536px;top:0px;width:1px;height:797px;background:#6e6e6e"></div>
<div style="left:0px;top:795px;width:1537px;height:1px;background:#a0a0a0"></div>
<div style="left:0px;top:796px;width:1537px;height:1px;background:#6e6e6e"></div>
<div style="left:1229px;top:763px;font-size:25px;line-height:30px;color:rgba(128,128,128,0.5);white-space:nowrap">Активация Windows</div></body></html>
